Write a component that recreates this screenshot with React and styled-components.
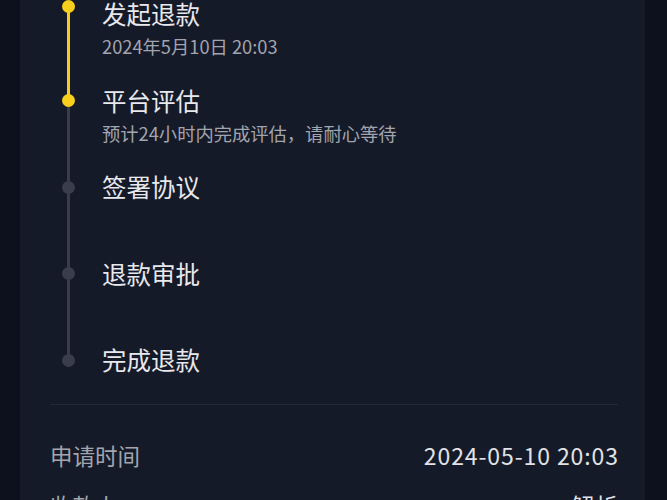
import React from 'react'
import styled, { createGlobalStyle } from 'styled-components'

const Global = createGlobalStyle`
  html, body {
    margin: 0;
    padding: 0;
    background: #0d111d;
    overflow: hidden;
  }
  body {
    font-family: "Noto Sans CJK SC", "Noto Sans", sans-serif;
  }
`

const Page = styled.div`
  width: 667px;
  height: 500px;
  overflow: hidden;
  padding: 0 22px 0 20px;
  box-sizing: border-box;
`

const Card = styled.div`
  background: #151a28;
  margin-top: 0;
  padding: 0 27px 0 30px;
  min-height: 560px;
`

const Steps = styled.div`
  display: flex;
  flex-direction: column;
`

const Step = styled.div`
  display: grid;
  grid-template-columns: 36px 1fr;
  column-gap: 16px;
  height: ${p => (p.last ? '28px' : '86.5px')};
`

const Rail = styled.div`
  display: flex;
  flex-direction: column;
  align-items: center;
`

const Segment = styled.div`
  width: 3px;
  background: ${p => (p.hidden ? 'transparent' : p.active ? '#f5cd1f' : '#393c4a')};
  height: ${p => (p.grow ? 'auto' : '8px')};
  flex: ${p => (p.grow ? 1 : 'none')};
`

const Dot = styled.div`
  width: 13px;
  height: 13px;
  border-radius: 50%;
  flex: none;
  margin: -0.5px 0;
  background: ${p => (p.active ? '#f7cf1c' : '#3a3d4b')};
`

const Body = styled.div`
  display: flex;
  flex-direction: column;
`

const Title = styled.div`
  font-size: 24.5px;
  line-height: 28px;
  color: #e8e8ed;
  font-weight: 400;
`

const Sub = styled.div`
  font-size: 18.3px;
  line-height: 22px;
  margin-top: 7px;
  color: #a2a4ae;
`

const Divider = styled.div`
  height: 1px;
  background: #242938;
  margin: 30px 0 0;
`

const InfoList = styled.div`
  padding-top: 36px;
  display: flex;
  flex-direction: column;
  gap: 22px;
`

const InfoRow = styled.div`
  display: flex;
  justify-content: space-between;
  align-items: center;
  line-height: 28px;
`

const Label = styled.span`
  font-size: 22.5px;
  color: #a3a5ae;
`

const Value = styled.span`
  font-size: 23px;
  color: #e2e2e7;
  letter-spacing: 0.9px;
  margin-right: -0.9px;
`

const steps = [
  { title: '发起退款', sub: '2024年5月10日 20:03', done: true },
  { title: '平台评估', sub: '预计24小时内完成评估，请耐心等待', done: true },
  { title: '签署协议' },
  { title: '退款审批' },
  { title: '完成退款' },
]

const App = () => {
  return (
    <>
      <Global />
      <Page>
        <Card>
          <Steps>
            {steps.map((s, i) => {
              const last = i === steps.length - 1
              const nextDone = !last && steps[i + 1].done
              return (
                <Step key={s.title} last={last}>
                  <Rail>
                    <Segment hidden={i === 0} active={s.done} />
                    <Dot active={s.done} />
                    {!last && <Segment grow active={nextDone} />}
                  </Rail>
                  <Body>
                    <Title>{s.title}</Title>
                    {s.sub && <Sub>{s.sub}</Sub>}
                  </Body>
                </Step>
              )
            })}
          </Steps>
          <Divider />
          <InfoList>
            <InfoRow>
              <Label>申请时间</Label>
              <Value>2024-05-10 20:03</Value>
            </InfoRow>
            <InfoRow>
              <Label>收款人</Label>
              <Value>解析</Value>
            </InfoRow>
          </InfoList>
        </Card>
      </Page>
    </>
  )
}

export default App
